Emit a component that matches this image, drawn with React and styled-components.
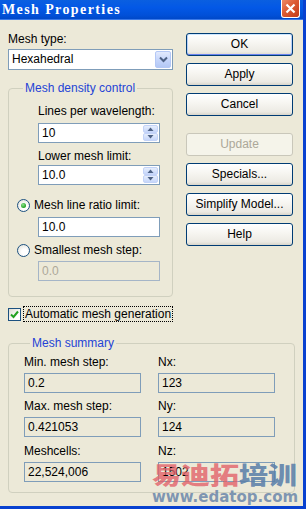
import React from "react";
import styled, { createGlobalStyle, css } from "styled-components";

const GlobalStyle = createGlobalStyle`
  html, body {
    margin: 0;
    padding: 0;
    background: #ece9d8;
  }
  * {
    box-sizing: border-box;
  }
`;

const Window = styled.div`
  position: relative;
  width: 306px;
  height: 509px;
  overflow: hidden;
  display: flex;
  flex-direction: column;
  background: #ece9d8;
  border-right: 3px solid #0841d0;
  border-bottom: 3px solid #0841d0;
  font-family: "Liberation Sans", Arial, sans-serif;
  font-size: 12px;
  color: #000;
`;

const TitleBar = styled.div`
  height: 20px;
  flex: none;
  display: flex;
  align-items: flex-start;
  justify-content: space-between;
  background: linear-gradient(#0a5fe0 0%, #0358e6 40%, #0150d8 80%, #0048c8 100%);
  border-bottom: 1px solid #3a79e8;
`;

const Title = styled.div`
  padding: 2px 0 0 2px;
  font-family: "Liberation Serif", "Times New Roman", serif;
  font-weight: 700;
  font-size: 14px;
  line-height: 15px;
  color: #fff;
  letter-spacing: 1.4px;
`;

const CloseButton = styled.div`
  width: 19px;
  height: 18px;
  margin-right: 3px;
  border: 1px solid #fff;
  border-top: none;
  border-radius: 0 0 3px 3px;
  background: linear-gradient(135deg, #ec8a68 0%, #dc5a32 45%, #c23c1a 100%);
  display: flex;
  align-items: center;
  justify-content: center;
`;

const Body = styled.div`
  flex: 1;
  padding: 12px 0 0 8px;
  display: flex;
  flex-direction: column;
`;

const TopArea = styled.div`
  display: grid;
  grid-template-columns: 165px 107px;
  column-gap: 13px;
  align-items: start;
`;

const LeftCol = styled.div`
  display: flex;
  flex-direction: column;
`;

const Label = styled.div`
  display: block;
  line-height: 14px;
  height: 14px;
  white-space: nowrap;
  margin-top: ${(p) => p.$mt || 0}px;
  margin-bottom: ${(p) => p.$mb || 0}px;
`;

const fieldBorder = css`
  border: 1px solid #7f9db9;
  height: 20px;
  line-height: 18px;
  padding-left: 3px;
  white-space: nowrap;
`;

const Select = styled.div`
  ${fieldBorder};
  height: 21px;
  line-height: 19px;
  background: #fff;
  display: flex;
  justify-content: space-between;
`;

const DropButton = styled.div`
  width: 16px;
  margin: 1px;
  border: 1px solid #b4c8f6;
  border-radius: 2px;
  background: linear-gradient(#e2eafd, #c2d3fb 60%, #b3c8f5);
  display: flex;
  align-items: center;
  justify-content: center;
`;

const Group = styled.fieldset`
  margin: ${(p) => p.$mt || 0}px 0 0;
  padding: ${(p) => p.$pad};
  border: 1px solid #d0d0bf;
  border-radius: 4px;
  min-width: 0;
  width: ${(p) => p.$w}px;
`;

const Legend = styled.legend`
  margin-left: 6px;
  padding: 0 2px;
  color: #2443d6;
  line-height: 14px;
  font-size: 12px;
`;

const Indented = styled.div`
  display: flex;
  flex-direction: column;
  padding-left: 21px;
`;

const Field = styled.div`
  ${fieldBorder};
  width: ${(p) => p.$w || 122}px;
  margin-top: ${(p) => p.$mt || 0}px;
  background: ${(p) => (p.$readonly || p.$disabled ? "#ece9d8" : "#fff")};
  color: ${(p) => (p.$disabled ? "#aca899" : "#000")};
  border-color: ${(p) => (p.$disabled ? "#a5b5c7" : "#7f9db9")};
`;

const SpinField = styled(Field)`
  display: flex;
  justify-content: space-between;
`;

const Spinner = styled.div`
  width: 15px;
  margin: 1px;
  display: flex;
  flex-direction: column;
`;

const SpinBtn = styled.div`
  flex: 1;
  border: 1px solid #c3d3f8;
  border-radius: 2px;
  background: linear-gradient(#e6eefc, #c6d6fa);
  display: flex;
  align-items: center;
  justify-content: center;
`;

const RadioRow = styled.div`
  display: flex;
  align-items: center;
  gap: 4px;
  height: 14px;
  margin-top: ${(p) => p.$mt || 0}px;
`;

const Radio = styled.span`
  width: 13px;
  height: 13px;
  border-radius: 50%;
  border: 1px solid #1c5180;
  background: radial-gradient(circle at 60% 65%, #fff 30%, #dcdcd2 100%);
  display: flex;
  align-items: center;
  justify-content: center;
  flex: none;
  &::after {
    content: "";
    display: ${(p) => (p.$checked ? "block" : "none")};
    width: 5px;
    height: 5px;
    border-radius: 50%;
    background: radial-gradient(circle at 40% 35%, #8fe28f, #21a121 70%);
  }
`;

const ButtonCol = styled.div`
  display: flex;
  flex-direction: column;
  gap: 7px;
  padding-top: 1px;
`;

const Button = styled.div`
  height: 23px;
  width: 107px;
  margin-top: ${(p) => p.$mt || 0}px;
  border: 1px solid ${(p) => (p.$disabled ? "#c9c7ba" : "#003c74")};
  border-radius: 3px;
  background: ${(p) =>
    p.$disabled
      ? "#f5f4ea"
      : "linear-gradient(#ffffff 0%, #f7f6f2 40%, #eceae3 85%, #d8d5cb 100%)"};
  color: ${(p) => (p.$disabled ? "#aca899" : "#000")};
  text-align: center;
  line-height: 21px;
  ${(p) =>
    p.$default &&
    css`
      box-shadow: inset 0 1px 0 #cee7ff, inset 0 -1px 0 #6982ee,
        inset 1px 0 0 #b8d0f8, inset -1px 0 0 #b8d0f8;
    `}
`;

const CheckRow = styled.div`
  display: flex;
  align-items: center;
  gap: 2px;
  margin-top: 9px;
  height: 16px;
`;

const CheckBox = styled.span`
  width: 13px;
  height: 13px;
  border: 1px solid #1c5180;
  background: linear-gradient(135deg, #dcdcd2, #fff 70%);
  display: flex;
  align-items: center;
  justify-content: center;
`;

const FocusLabel = styled.span`
  border: 1px dotted #000;
  height: 16px;
  line-height: 14px;
  padding: 0 1px;
  white-space: nowrap;
`;

const SummaryGrid = styled.div`
  display: grid;
  grid-template-columns: 117px 117px;
  column-gap: 17px;
`;

const SummaryCell = styled.div`
  display: flex;
  flex-direction: column;
  gap: 4px;
  margin-top: ${(p) => p.$mt || 0}px;
`;

const Watermark = styled.div`
  position: absolute;
  left: 152px;
  top: 456px;
  display: flex;
  flex-direction: column;
  align-items: flex-start;
  pointer-events: none;
`;

const WmCn = styled.div`
  font-family: "Noto Sans CJK SC", sans-serif;
  font-size: 29px;
  font-weight: 900;
  line-height: 34px;
  white-space: nowrap;
  transform: scaleY(0.82);
`;

const WmPart = styled.span`
  color: ${(p) => p.$c};
`;

const WmUrl = styled.div`
  margin-top: -1px;
  font-family: "DejaVu Sans", sans-serif;
  font-weight: 700;
  font-size: 15px;
  line-height: 16px;
  color: rgba(106, 134, 170, 0.85);
  white-space: nowrap;
`;

const Chevron = () => (
  <svg width="9" height="7" viewBox="0 0 9 7">
    <path d="M1 1.5 L4.5 5 L8 1.5" fill="none" stroke="#4d6185" strokeWidth="2" />
  </svg>
);

const Arrow = ({ up }) => (
  <svg width="7" height="4" viewBox="0 0 7 4">
    <path d={up ? "M0.5 4 L3.5 0.5 L6.5 4 Z" : "M0.5 0 L3.5 3.5 L6.5 0 Z"} fill="#4d6185" />
  </svg>
);

const SpinInput = ({ value, mt }) => (
  <SpinField $mt={mt}>
    <span>{value}</span>
    <Spinner>
      <SpinBtn>
        <Arrow up />
      </SpinBtn>
      <SpinBtn>
        <Arrow />
      </SpinBtn>
    </Spinner>
  </SpinField>
);

export default function App() {
  return (
    <>
      <GlobalStyle />
      <Window>
        <TitleBar>
          <Title>Mesh Properties</Title>
          <CloseButton>
            <svg width="11" height="11" viewBox="0 0 11 11">
              <path d="M1.5 1.5 L9.5 9.5 M9.5 1.5 L1.5 9.5" stroke="#fff" strokeWidth="2.2" />
            </svg>
          </CloseButton>
        </TitleBar>
        <Body>
          <TopArea>
            <LeftCol>
              <Label $mb={3}>Mesh type:</Label>
              <Select>
                <span>Hexahedral</span>
                <DropButton>
                  <Chevron />
                </DropButton>
              </Select>
              <Group $mt={11} $w={165} $pad="9px 0 15px 8px">
                <Legend>Mesh density control</Legend>
                <Indented>
                  <Label>Lines per wavelength:</Label>
                  <SpinInput value="10" mt={5} />
                  <Label $mt={6}>Lower mesh limit:</Label>
                  <SpinInput value="10.0" mt={2} />
                </Indented>
                <RadioRow $mt={13}>
                  <Radio $checked />
                  <span>Mesh line ratio limit:</span>
                </RadioRow>
                <Indented>
                  <Field $mt={5}>10.0</Field>
                </Indented>
                <RadioRow $mt={6}>
                  <Radio />
                  <span>Smallest mesh step:</span>
                </RadioRow>
                <Indented>
                  <Field $mt={4} $disabled>
                    0.0
                  </Field>
                </Indented>
              </Group>
            </LeftCol>
            <ButtonCol>
              <Button $default>OK</Button>
              <Button>Apply</Button>
              <Button>Cancel</Button>
              <Button $disabled $mt={10}>
                Update
              </Button>
              <Button>Specials...</Button>
              <Button>Simplify Model...</Button>
              <Button>Help</Button>
            </ButtonCol>
          </TopArea>
          <CheckRow>
            <CheckBox>
              <svg width="9" height="9" viewBox="0 0 9 9">
                <path d="M1 4.5 L3.5 7 L8 1.5" fill="none" stroke="#21a121" strokeWidth="2" />
              </svg>
            </CheckBox>
            <FocusLabel>Automatic mesh generation</FocusLabel>
          </CheckRow>
          <Group $mt={14} $w={287} $pad="5px 0 10px 15px">
            <Legend>Mesh summary</Legend>
            <SummaryGrid>
              <SummaryCell>
                <Label>Min. mesh step:</Label>
                <Field $w={117} $readonly>0.2</Field>
              </SummaryCell>
              <SummaryCell>
                <Label>Nx:</Label>
                <Field $w={117} $readonly>123</Field>
              </SummaryCell>
              <SummaryCell $mt={6}>
                <Label>Max. mesh step:</Label>
                <Field $w={117} $readonly>0.421053</Field>
              </SummaryCell>
              <SummaryCell $mt={6}>
                <Label>Ny:</Label>
                <Field $w={117} $readonly>124</Field>
              </SummaryCell>
              <SummaryCell $mt={7}>
                <Label>Meshcells:</Label>
                <Field $w={117} $readonly>22,524,006</Field>
              </SummaryCell>
              <SummaryCell $mt={7}>
                <Label>Nz:</Label>
                <Field $w={117} $readonly>1502</Field>
              </SummaryCell>
            </SummaryGrid>
          </Group>
        </Body>
        <Watermark>
          <WmCn>
            <WmPart $c="rgba(226, 96, 104, 0.8)">易迪拓</WmPart>
            <WmPart $c="rgba(92, 128, 170, 0.9)">培训</WmPart>
          </WmCn>
          <WmUrl>www.edatop.com</WmUrl>
        </Watermark>
      </Window>
    </>
  );
}
